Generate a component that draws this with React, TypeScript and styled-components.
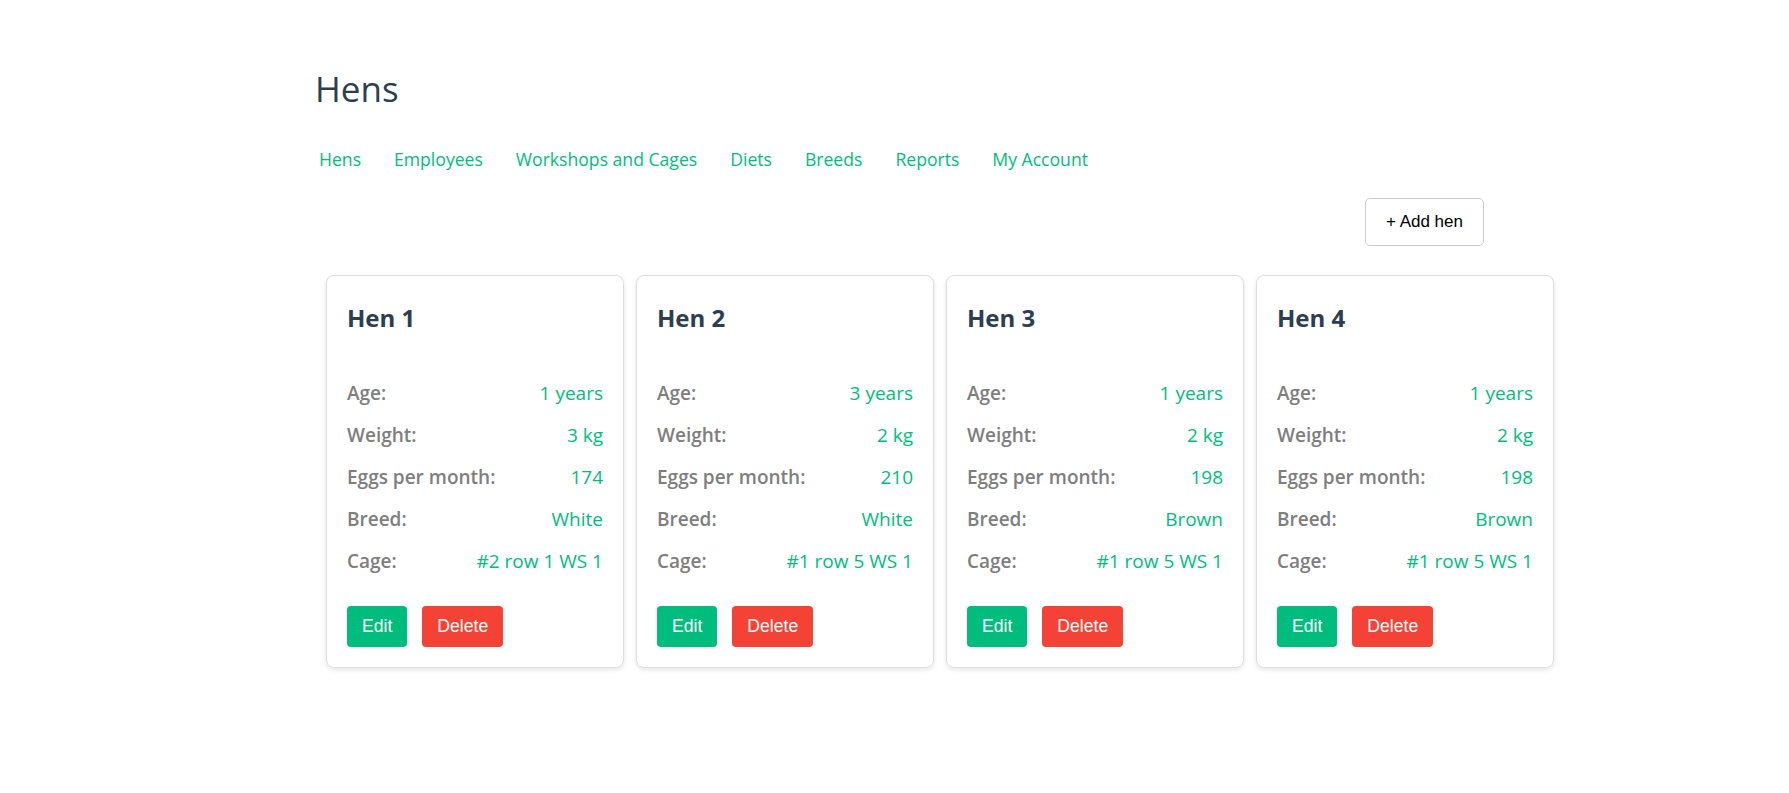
import styled, { createGlobalStyle } from 'styled-components'

const GlobalStyle = createGlobalStyle`
  body {
    margin: 0;
    background: #fff;
    font-family: "Open Sans", "Noto Sans", sans-serif;
    color: #2c3e50;
  }
`

const green = '#00bd7e'

const Page = styled.div`
  padding: 69px 0 80px 314px;
`

const Title = styled.h1`
  margin: 0 0 0 1px;
  font-size: 35px;
  line-height: 40px;
  font-weight: 400;
  color: #2c3e50;
`

const Nav = styled.nav`
  display: flex;
  gap: 33px;
  margin-top: 38px;
  padding-left: 5px;
`

const NavLink = styled.a`
  font-size: 17.6px;
  line-height: 24px;
  color: ${green};
  text-decoration: none;
  cursor: pointer;
`

const Toolbar = styled.div`
  width: 1170px;
  display: flex;
  justify-content: flex-end;
  margin-top: 27px;
`

const AddButton = styled.button`
  font-family: "Liberation Sans", Arial, sans-serif;
  font-size: 17px;
  padding: 13px 20px;
  background: #fff;
  color: #000;
  border: 1px solid #ccc;
  border-radius: 5px;
  cursor: pointer;
`

const CardGrid = styled.div`
  display: grid;
  grid-template-columns: repeat(4, 298px);
  gap: 12px;
  margin-top: 29px;
  padding-left: 12px;
`

const Card = styled.div`
  box-sizing: border-box;
  border: 1px solid #dedede;
  border-radius: 8px;
  box-shadow: 0 2px 5px rgba(0, 0, 0, 0.1);
  padding: 20px;
`

const CardTitle = styled.h2`
  margin: 7px 0 39px;
  font-size: 24px;
  line-height: 30px;
  font-weight: 700;
  color: #2c3e50;
`

const Row = styled.div`
  display: flex;
  justify-content: space-between;
  font-size: 19px;
  line-height: 42px;
`

const Label = styled.span`
  font-weight: 600;
  color: #7e7e7e;
`

const Value = styled.span`
  color: ${green};
`

const Actions = styled.div`
  display: flex;
  gap: 15px;
  margin-top: 24px;
`

const ActionButton = styled.button<{ $danger?: boolean }>`
  font-family: "Liberation Sans", Arial, sans-serif;
  font-size: 17.6px;
  padding: 10px 15px;
  border: none;
  border-radius: 4px;
  color: #fff;
  background: ${p => (p.$danger ? '#f44336' : green)};
  cursor: pointer;
`

const hens = [
  { name: 'Hen 1', age: 1, weight: 3, eggs: 174, breed: 'White', cage: '#2 row 1 WS 1' },
  { name: 'Hen 2', age: 3, weight: 2, eggs: 210, breed: 'White', cage: '#1 row 5 WS 1' },
  { name: 'Hen 3', age: 1, weight: 2, eggs: 198, breed: 'Brown', cage: '#1 row 5 WS 1' },
  { name: 'Hen 4', age: 1, weight: 2, eggs: 198, breed: 'Brown', cage: '#1 row 5 WS 1' }
]

const links = ['Hens', 'Employees', 'Workshops and Cages', 'Diets', 'Breeds', 'Reports', 'My Account']

function App() {
  return (
    <Page>
      <GlobalStyle />
      <Title>Hens</Title>
      <Nav>
        {links.map(l => (
          <NavLink key={l}>{l}</NavLink>
        ))}
      </Nav>
      <Toolbar>
        <AddButton>+ Add hen</AddButton>
      </Toolbar>
      <CardGrid>
        {hens.map(h => (
          <Card key={h.name}>
            <CardTitle>{h.name}</CardTitle>
            <Row>
              <Label>Age:</Label>
              <Value>{h.age} years</Value>
            </Row>
            <Row>
              <Label>Weight:</Label>
              <Value>{h.weight} kg</Value>
            </Row>
            <Row>
              <Label>Eggs per month:</Label>
              <Value>{h.eggs}</Value>
            </Row>
            <Row>
              <Label>Breed:</Label>
              <Value>{h.breed}</Value>
            </Row>
            <Row>
              <Label>Cage:</Label>
              <Value>{h.cage}</Value>
            </Row>
            <Actions>
              <ActionButton>Edit</ActionButton>
              <ActionButton $danger>Delete</ActionButton>
            </Actions>
          </Card>
        ))}
      </CardGrid>
    </Page>
  )
}

export default App
